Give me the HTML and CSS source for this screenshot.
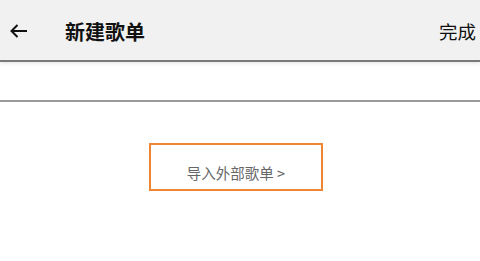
FILE: index.html
```html
<!DOCTYPE html>
<html lang="zh">
<head>
    <meta charset="UTF-8">
    <title>新建歌单</title>
    <link rel="stylesheet" href="styles.css">
</head>
<body>
    <div class="header">
        <div class="back">
            <svg width="18" height="14" viewBox="0 0 18 14">
                <path d="M1.5 7H17M7.5 1L1.5 7L7.5 13" fill="none" stroke="#111" stroke-width="2"/>
            </svg>
        </div>
        <div class="title">新建歌单</div>
        <div class="done">完成</div>
    </div>
    <div class="name-field"></div>
    <div class="import-wrap">
        <div class="import">导入外部歌单 &gt;</div>
    </div>
</body>
</html>
```

FILE: styles.css
```css
body {
    margin: 0;
    background: #fff;
    font-family: "Noto Sans CJK SC", "Noto Sans", sans-serif;
}
.header {
    display: flex;
    align-items: center;
    height: 60px;
    background: #f1f1f1;
    border-bottom: 2px solid #7a7a7a;
    box-shadow: 0 2px 3px rgba(0, 0, 0, 0.08);
}
.back {
    display: flex;
    width: 18px;
    margin-left: 10px;
    padding-top: 2px;
}
.title {
    margin-left: 37px;
    padding-top: 2px;
    font-size: 20px;
    font-weight: bold;
    color: #111;
}
.done {
    margin-left: auto;
    margin-right: 4px;
    padding-top: 2px;
    font-size: 18.5px;
    color: #111;
}
.name-field {
    height: 38px;
    border-bottom: 2px solid #9a9a9a;
}
.import-wrap {
    display: flex;
    justify-content: center;
    padding-top: 41px;
}
.import {
    width: 170px;
    height: 37px;
    margin-left: -8px;
    padding-bottom: 7px;
    border: 2px solid #ee8636;
    display: flex;
    align-items: flex-end;
    justify-content: center;
    font-size: 14.5px;
    line-height: 18px;
    color: #666;
}
```
